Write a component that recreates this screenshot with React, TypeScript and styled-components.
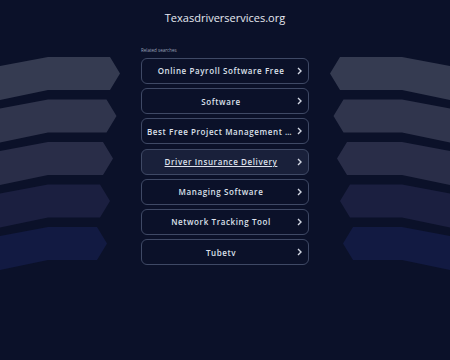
import * as React from 'react';
import styled, { createGlobalStyle } from 'styled-components';

const searches = [
  'Online Payroll Software Free',
  'Software',
  'Best Free Project Management Software',
  'Driver Insurance Delivery',
  'Managing Software',
  'Network Tracking Tool',
  'Tubetv',
];

const arrowColors = ['#353b51', '#30354d', '#292d48', '#1b1f40', '#121a42'];
const tips = [120, 116.5, 113, 110, 107];

const GlobalStyle = createGlobalStyle`
  html, body {
    margin: 0;
    padding: 0;
    background: #0b1129;
  }
`;

const Deco = ({ flip }: { flip?: boolean }) => (
  <DecoSvg width="121" height="230" viewBox="0 0 121 230" $flip={flip}>
    {arrowColors.map((color, i) => {
      const top = 10 + 42.5 * i;
      const bottom = top + 33;
      const tip = tips[i];
      const flat = tip - 10;
      return (
        <path
          key={i}
          fill={color}
          d={`M0 ${top + 9} L48 ${top} L${flat} ${top} L${tip} ${top + 16.5} L${flat} ${bottom} L48 ${bottom} L0 ${bottom + 10} Z`}
        />
      );
    })}
  </DecoSvg>
);

const Chevron = () => (
  <ChevronSvg width="5" height="8" viewBox="0 0 5 8">
    <polyline points="1,1 4,4 1,7" fill="none" stroke="#d3d8e4" strokeWidth="1.4" />
  </ChevronSvg>
);

const App = () => (
  <Page>
    <GlobalStyle />
    <Title>Texasdriverservices.org</Title>
    <Body>
      <Deco />
      <List>
        <Related>Related searches</Related>
        {searches.map((s, i) => (
          <SearchButton key={s} href="#" $active={i === 3}>
            <Label $active={i === 3}>{s}</Label>
            <Chevron />
          </SearchButton>
        ))}
      </List>
      <Deco flip />
    </Body>
  </Page>
);

const Page = styled.div`
  width: 450px;
  min-height: 360px;
  background: #0b1129;
  font-family: 'Open Sans', 'Noto Sans', sans-serif;
  overflow: hidden;
`;

const Title = styled.h1`
  margin: 0;
  padding-top: 11px;
  font-size: 11px;
  line-height: 14px;
  font-weight: 400;
  color: #e6e9f1;
  text-align: center;
`;

const Body = styled.div`
  display: grid;
  grid-template-columns: 121px 168px 121px;
  justify-content: space-between;
  align-items: start;
  margin-top: 22px;
`;

const DecoSvg = styled.svg<{ $flip?: boolean }>`
  display: block;
  transform: ${p => (p.$flip ? 'scaleX(-1)' : 'none')};
`;

const List = styled.div`
  display: flex;
  flex-direction: column;
  gap: 4.2px;
`;

const Related = styled.div`
  font-size: 4.5px;
  line-height: 6px;
  color: #9aa2b8;
  margin-bottom: 0.8px;
`;

const SearchButton = styled.a<{ $active?: boolean }>`
  display: flex;
  align-items: center;
  gap: 2px;
  height: 26px;
  box-sizing: border-box;
  padding: 0 6px 0 5px;
  border: 1px solid #3f4965;
  border-radius: 6px;
  background: ${p => (p.$active ? '#19203a' : 'transparent')};
  color: #dde1ec;
  text-decoration: none;
`;

const Label = styled.span<{ $active?: boolean }>`
  flex: 1;
  min-width: 0;
  text-align: center;
  font-size: 8px;
  font-weight: 600;
  letter-spacing: 0.6px;
  white-space: nowrap;
  overflow: hidden;
  text-overflow: ellipsis;
  text-decoration: ${p => (p.$active ? 'underline' : 'none')};
`;

const ChevronSvg = styled.svg`
  display: block;
  flex: none;
`;

export default App;
